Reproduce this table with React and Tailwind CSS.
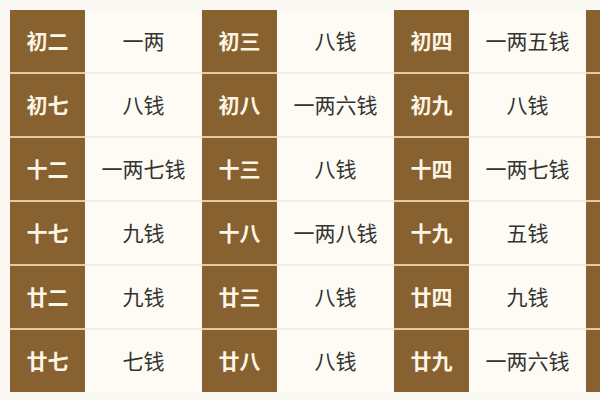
const rows = [
  ['初二', '一两', '初三', '八钱', '初四', '一两五钱', ''],
  ['初七', '八钱', '初八', '一两六钱', '初九', '八钱', ''],
  ['十二', '一两七钱', '十三', '八钱', '十四', '一两七钱', ''],
  ['十七', '九钱', '十八', '一两八钱', '十九', '五钱', ''],
  ['廿二', '九钱', '廿三', '八钱', '廿四', '九钱', ''],
  ['廿七', '七钱', '廿八', '八钱', '廿九', '一两六钱', ''],
];

function Cell({ text, head, first }) {
  if (head) {
    return (
      <div
        className={`flex items-center justify-center bg-[#87612f] text-[#fdf5e4] text-[21px] font-bold ${first ? 'h-[62px]' : 'h-[64px] border-t-2 border-[#e6c7a2]'}`}
      >
        {text}
      </div>
    );
  }
  return (
    <div
      className={`flex items-center justify-center bg-[#fdfbf3] text-[#333333] text-[21px] ${first ? 'h-[62px]' : 'h-[64px] border-t-2 border-[#f1ede2]'}`}
    >
      {text}
    </div>
  );
}

export default function App() {
  return (
    <div
      className="w-[600px] h-[400px] overflow-hidden bg-[#f9f8f3] pt-[10px] pl-[10px]"
      style={{ fontFamily: '"Noto Sans CJK SC", "Noto Sans", sans-serif' }}
    >
      <div className="grid grid-cols-[75px_117px_75px_117px_75px_117px_75px] w-[651px]">
        {rows.map((row, i) =>
          row.map((text, j) => (
            <Cell key={`${i}-${j}`} text={text} head={j % 2 === 0} first={i === 0} />
          ))
        )}
      </div>
    </div>
  );
}
